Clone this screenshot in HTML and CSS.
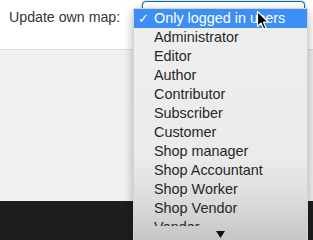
FILE: index.html
```html
<!DOCTYPE html>
<html lang="en">
<head>
    <meta charset="UTF-8">
    <meta name="viewport" content="width=device-width, initial-scale=1.0">
    <title>Update own map</title>
    <link rel="stylesheet" href="styles.css">
</head>
<body>
    <!-- Settings row -->
    <div class="settings-row">
        <label class="field-label">Update own map:</label>
        <div class="select-box"></div>
    </div>

    <!-- Rest of the admin page -->
    <div class="page-body"></div>
    <div class="footer-bar"></div>

    <!-- Open dropdown menu -->
    <div class="dropdown-menu">
        <ul class="menu-list">
            <li class="menu-item selected"><span class="check">&#10003;</span>Only logged in users</li>
            <li class="menu-item">Administrator</li>
            <li class="menu-item">Editor</li>
            <li class="menu-item">Author</li>
            <li class="menu-item">Contributor</li>
            <li class="menu-item">Subscriber</li>
            <li class="menu-item">Customer</li>
            <li class="menu-item">Shop manager</li>
            <li class="menu-item">Shop Accountant</li>
            <li class="menu-item">Shop Worker</li>
            <li class="menu-item">Shop Vendor</li>
            <li class="menu-item">Vendor</li>
        </ul>
        <div class="scroll-arrow">
            <svg width="9" height="7" viewBox="0 0 9 7"><path d="M0 0 H9 L4.5 7 Z" fill="#111"/></svg>
        </div>
    </div>

    <!-- Mouse pointer -->
    <svg class="cursor" width="14" height="21" viewBox="0 0 14 21">
        <path d="M1.5 1.5 L1.5 16.5 L5 13 L7.6 19 L10 18 L7.5 12.2 L12.5 12.2 Z" fill="#000" stroke="#fff" stroke-width="1.2" stroke-linejoin="round"/>
    </svg>
</body>
</html>
```

FILE: styles.css
```css
/* General Styles */
body {
    margin: 0;
    height: 240px;
    display: flex;
    flex-direction: column;
    font-family: 'Liberation Sans', Arial, sans-serif;
    background: #f1f1f1;
    overflow: hidden;
}

/* Top settings row */
.settings-row {
    height: 41px;
    padding: 8px 9px 0;
    background: #fff;
    border-bottom: 1px solid #dcdcde;
}

.field-label {
    font-size: 14.2px;
    line-height: 18px;
    color: #32373c;
}

/* Select sitting under the open menu */
.select-box {
    position: absolute;
    left: 142px;
    top: 1px;
    width: 161px;
    height: 28px;
    background: #fff;
    border: 1px solid #1d6aa0;
    border-radius: 4px;
    box-shadow: 0 0 2px rgba(30, 140, 190, 0.8);
}

.page-body {
    flex: 1;
}

.footer-bar {
    height: 39px;
    background: #1e1e1e;
}

/* Dropdown menu */
.dropdown-menu {
    position: absolute;
    left: 133px;
    top: 8px;
    width: 173px;
    height: 240px;
    background: linear-gradient(#efefef 0, #ebebeb 150px, #dadada 195px, #c3c3c3 235px);
    border: 1px solid #d4d4d4;
    border-bottom: none;
    box-shadow: 0 4px 10px rgba(0, 0, 0, 0.3);
}

.menu-list {
    list-style: none;
    margin: 0;
    padding: 0;
    height: 217px;
    overflow: hidden;
}

.menu-item {
    height: 19px;
    line-height: 19px;
    padding-left: 20px;
    font-size: 14.4px;
    color: #262626;
    white-space: nowrap;
    position: relative;
}

.menu-item.selected {
    background: #3d8ef5;
    color: #fff;
}

.check {
    position: absolute;
    left: 4px;
    font-family: 'DejaVu Sans', sans-serif;
    font-size: 13px;
    font-weight: bold;
}

.scroll-arrow {
    display: flex;
    justify-content: center;
    padding-top: 5px;
}

/* Mouse pointer */
.cursor {
    position: absolute;
    left: 256px;
    top: 10px;
}
```
